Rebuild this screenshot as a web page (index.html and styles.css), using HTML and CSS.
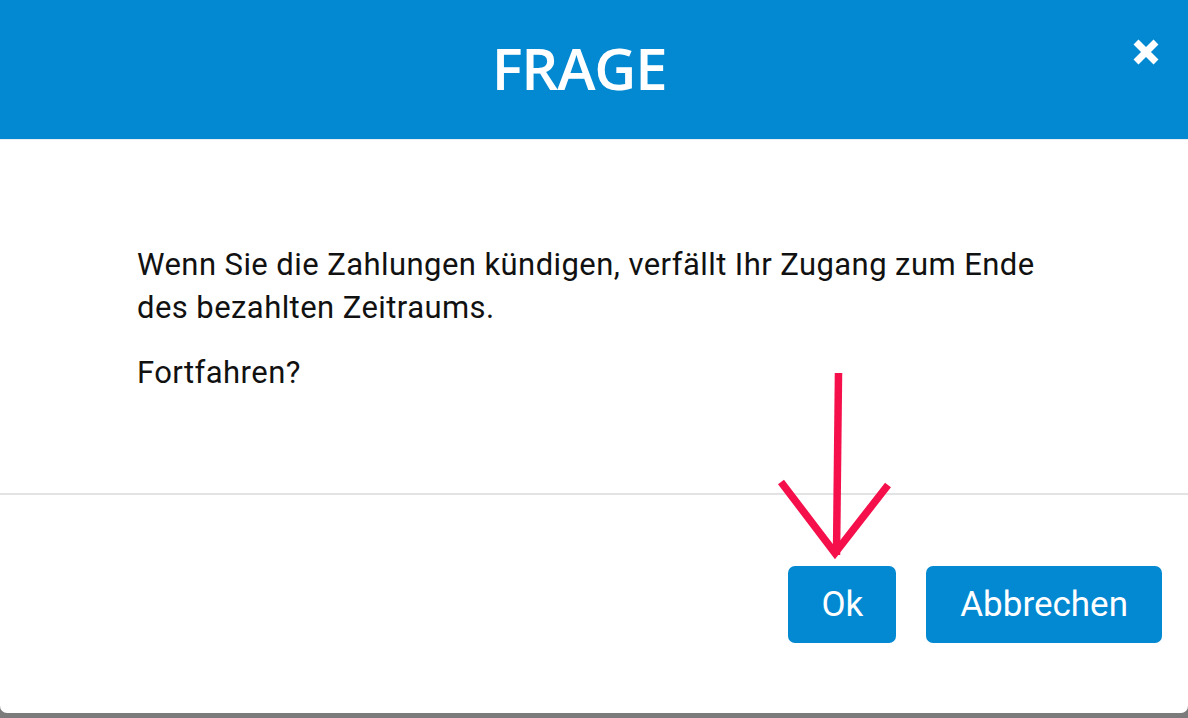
FILE: index.html
```html
<!DOCTYPE html>
<html lang="de">
<head>
<meta charset="utf-8">
<title>Frage</title>
<link rel="stylesheet" href="styles.css">
</head>
<body>
<div class="dialog">
  <header class="dialog-header">
    <h1 class="dialog-title">FRAGE</h1>
    <button class="close-btn" aria-label="Schließen">
      <svg width="28" height="30" viewBox="0 0 28 30">
        <path d="M4 5 L24 25 M24 5 L4 25" stroke="#fff" stroke-width="7" fill="none"/>
      </svg>
    </button>
  </header>
  <section class="dialog-content">
    <p class="msg">Wenn Sie die Zahlungen kündigen, verfällt Ihr Zugang zum Ende<br>des bezahlten Zeitraums.</p>
    <p class="msg">Fortfahren?</p>
  </section>
  <footer class="dialog-footer">
    <button class="btn">Ok</button>
    <button class="btn">Abbrechen</button>
  </footer>
  <svg class="arrow" width="1188" height="718" viewBox="0 0 1188 718">
    <path d="M838.5 373 L836.5 555" stroke="#f50f4b" stroke-width="7.5" fill="none"/>
    <path d="M781 482 L835 553 L888 485" stroke="#f50f4b" stroke-width="7.5" fill="none" stroke-linejoin="miter"/>
  </svg>
</div>
</body>
</html>
```
FILE: styles.css
```css
html, body {
  margin: 0;
  padding: 0;
}
body {
  background: #7b7b7b;
  width: 1188px;
  height: 718px;
  overflow: hidden;
  font-family: Roboto, "Liberation Sans", sans-serif;
}
.dialog {
  position: relative;
  width: 1188px;
  height: 713px;
  background: #ffffff;
  border-radius: 0 0 7px 7px;
  display: flex;
  flex-direction: column;
}
.dialog-header {
  position: relative;
  height: 139px;
  background: #0388d2;
  display: flex;
  align-items: center;
  justify-content: center;
  padding-right: 30px;
  border-bottom: 1px solid #e9eef2;
}
.dialog-title {
  margin: 0;
  padding-bottom: 4px;
  color: #ffffff;
  font-family: "Open Sans", "Noto Sans", sans-serif;
  font-weight: 600;
  font-size: 58px;
  line-height: 1;
  letter-spacing: -1.2px;
}
.close-btn {
  position: absolute;
  right: 28px;
  top: 37px;
  width: 28px;
  height: 30px;
  padding: 0;
  border: 0;
  background: none;
  display: block;
}
.close-btn svg {
  display: block;
}
.dialog-content {
  height: 355px;
  box-sizing: border-box;
  padding: 103px 0 0 137px;
  border-bottom: 2px solid #e3e3e3;
}
.msg {
  margin: 0 0 22px;
  font-size: 31px;
  line-height: 43px;
  letter-spacing: 0.43px;
  color: #111111;
}
.dialog-footer {
  display: flex;
  justify-content: flex-end;
  gap: 30px;
  padding: 71px 26px 0 0;
}
.btn {
  height: 77px;
  padding: 0 33px;
  border: 0;
  border-radius: 7px;
  background: #0388d2;
  color: #ffffff;
  font-family: Roboto, "Liberation Sans", sans-serif;
  font-size: 35px;
  line-height: 1;
}
.btn + .btn {
  padding: 0 34px;
}
.arrow {
  position: absolute;
  left: 0;
  top: 0;
  pointer-events: none;
}
```
